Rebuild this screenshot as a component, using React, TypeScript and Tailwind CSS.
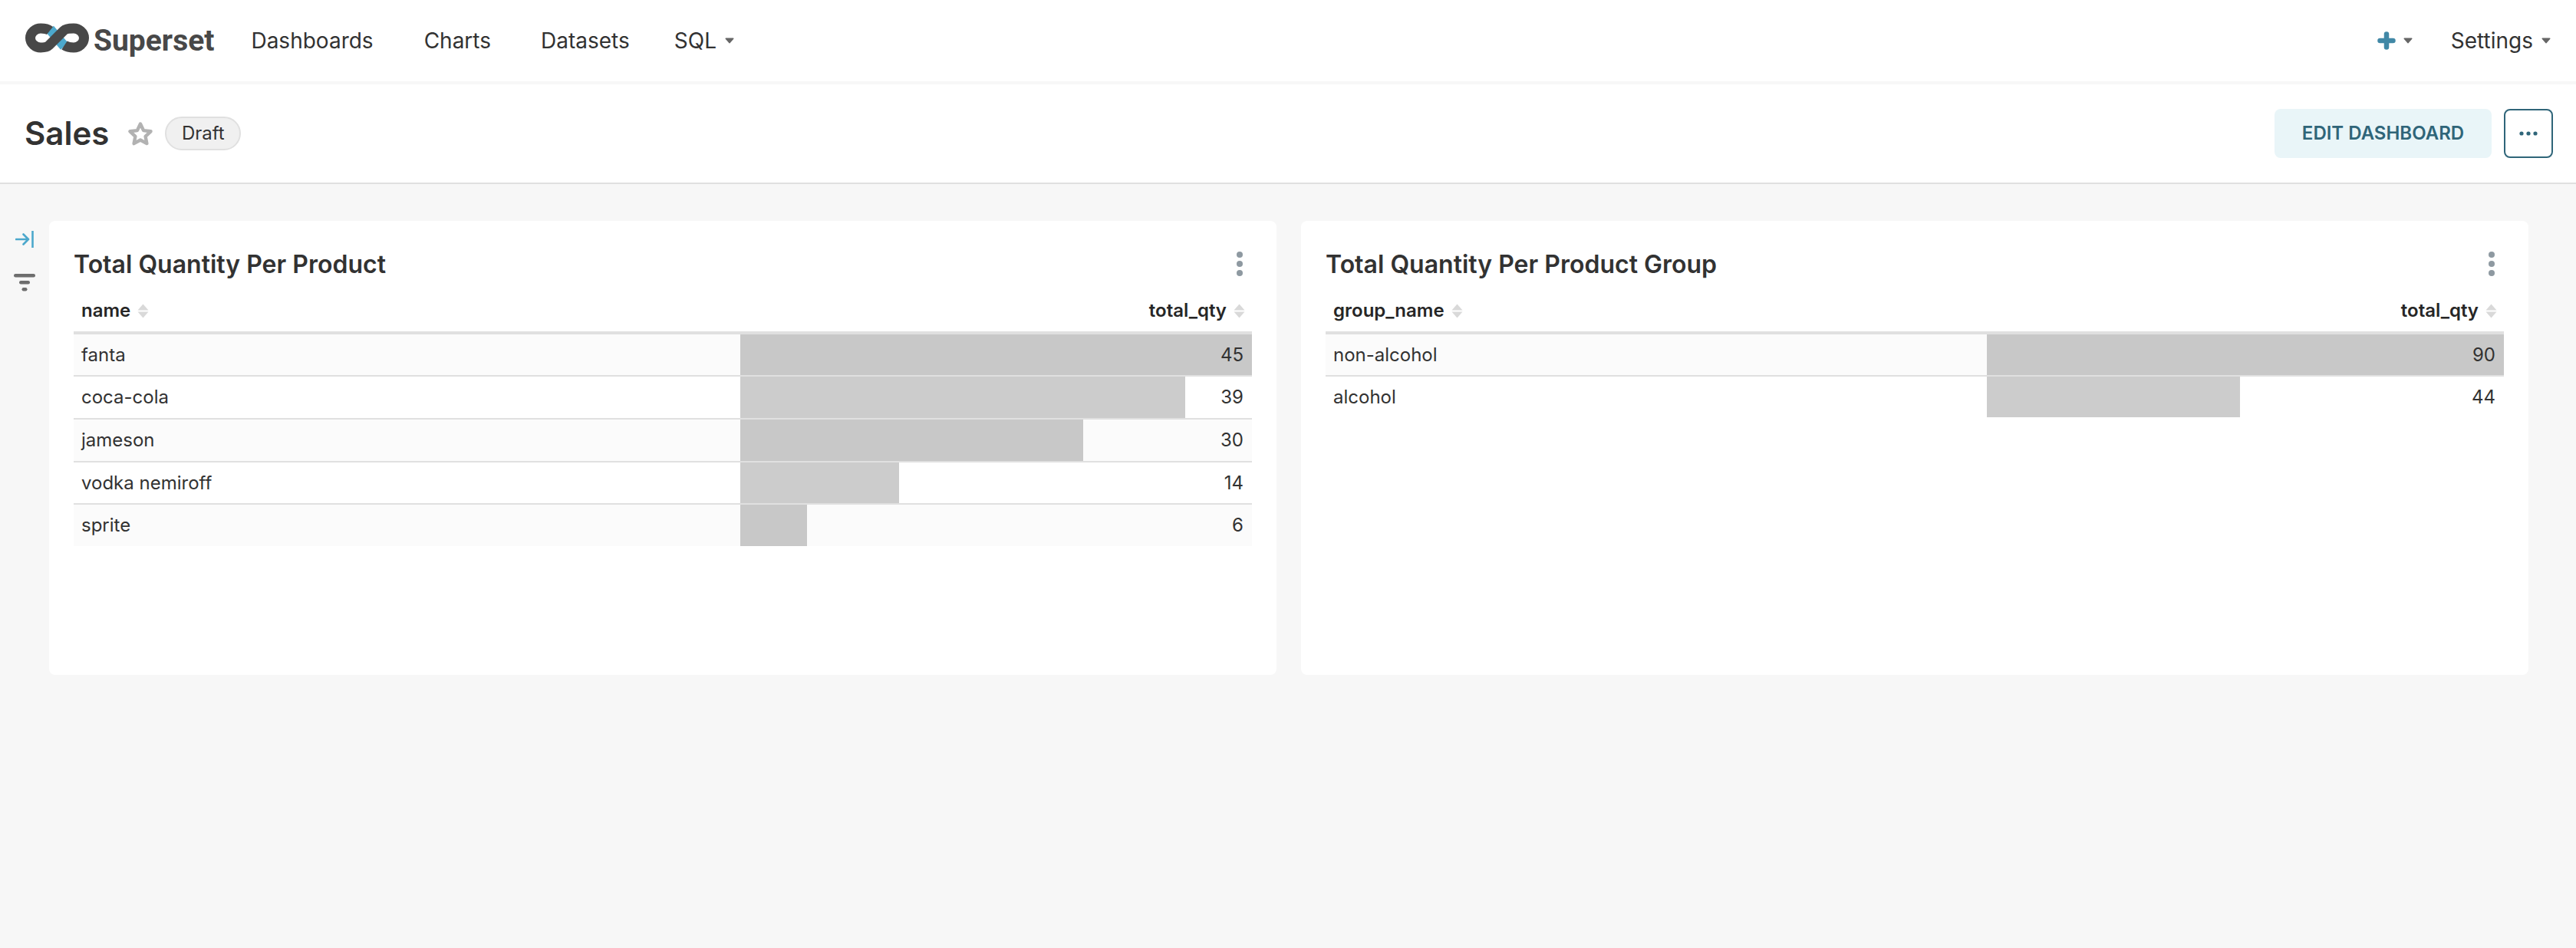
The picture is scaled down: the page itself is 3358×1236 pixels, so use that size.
const navLinks = [
  { label: "Dashboards", className: "ml-[48px]" },
  { label: "Charts", className: "ml-[66px]" },
  { label: "Datasets", className: "ml-[65px]" },
];

type Row = { label: string; value: number; bar: number; height: string };

const productRows: Row[] = [
  { label: "fanta", value: 45, bar: 100, height: "h-[55px]" },
  { label: "coca-cola", value: 39, bar: 86.9, height: "h-[56px]" },
  { label: "jameson", value: 30, bar: 67, height: "h-[56px]" },
  { label: "vodka nemiroff", value: 14, bar: 31, height: "h-[55px]" },
  { label: "sprite", value: 6, bar: 13.1, height: "h-[54px]" },
];

const groupRows: Row[] = [
  { label: "non-alcohol", value: 90, bar: 100, height: "h-[55px]" },
  { label: "alcohol", value: 44, bar: 49, height: "h-[53px]" },
];

function Caret() {
  return (
    <svg width="12" height="8" viewBox="0 0 12 8" className="shrink-0">
      <path d="M1.200 1.200h9.600L6 6.800z" fill="#666666" stroke="#666666" strokeWidth="1.400" strokeLinejoin="round" />
    </svg>
  );
}

function SortIcon() {
  return (
    <svg width="15" height="19" viewBox="0 0 15 19" className="shrink-0">
      <path d="M7.500 0.500L14.500 8.500H0.500z" fill="#d9d9d9" />
      <path d="M7.500 18.500L14.500 10.500H0.500z" fill="#d9d9d9" />
    </svg>
  );
}

function Logo() {
  return (
    <svg width="83" height="39" viewBox="0 0 83 38" className="mb-[8px] shrink-0">
      <path d="M32 7.500L51 30" fill="none" stroke="#4ca8cc" strokeWidth="13" />
      <path
        d="M32 9.500C29.500 7.500 25 6.500 20 6.500C13 6.500 6.500 12 6.500 19C6.500 26 13 31.500 20 31.500C25 31.500 29 30.500 31 28.500L50 9.500C52 7.500 57 6.500 63 6.500C70 6.500 76.500 12 76.500 19C76.500 26 70 31.500 63 31.500C58 31.500 54 30.500 51 28.500"
        fill="none"
        stroke="#484848"
        strokeWidth="13"
      />
    </svg>
  );
}

function DataTable({
  title,
  column,
  rows,
  labelClass,
  barClass,
}: {
  title: string;
  column: string;
  rows: Row[];
  labelClass: string;
  barClass: string;
}) {
  return (
    <section className="flex-1 h-[592px] rounded-lg bg-white px-[32px] pt-[32px]">
      <div className="flex h-[48px] items-center justify-between">
        <h2 className="mt-[2px] text-[32px] font-semibold leading-none text-[#323232]">{title}</h2>
        <svg width="8" height="32" viewBox="0 0 8 32" className="mr-[12px]">
          <circle cx="4" cy="4" r="4" fill="#8e99a1" />
          <circle cx="4" cy="16" r="4" fill="#8e99a1" />
          <circle cx="4" cy="28" r="4" fill="#8e99a1" />
        </svg>
      </div>
      <table className="w-full table-fixed border-separate border-spacing-0 text-[24px]">
        <colgroup>
          <col className={labelClass} />
          <col className={barClass} />
        </colgroup>
        <thead>
          <tr>
            <th className="h-[68px] border-b-4 border-[#e0e0e0] pl-[10px] pt-[10px] text-left font-semibold text-[#262626]">
              <span className="flex items-center gap-[9px]">
                {column}
                <SortIcon />
              </span>
            </th>
            <th className="border-b-4 border-[#e0e0e0] pr-[9px] pt-[10px] font-semibold text-[#262626]">
              <span className="flex items-center justify-end gap-[9px]">
                total_qty
                <SortIcon />
              </span>
            </th>
          </tr>
        </thead>
        <tbody>
          {rows.map((row, i) => {
            const last = i === rows.length - 1;
            return (
              <tr key={row.label} className={i % 2 === 0 ? "bg-[#fbfbfb]" : "bg-white"}>
                <td className={`${row.height} pl-[10px] ${last ? "" : "border-b-2 border-[#e0e0e0]"}`}>
                  {row.label}
                </td>
                <td className={`relative pr-[11px] text-right ${last ? "" : "border-b-2 border-[#e0e0e0]"}`}>
                  <div className="absolute inset-y-0 left-0 bg-black/20" style={{ width: `${row.bar}%` }} />
                  <span className="relative">{row.value}</span>
                </td>
              </tr>
            );
          })}
        </tbody>
      </table>
    </section>
  );
}

export default function App() {
  return (
    <div className="flex min-h-[1236px] flex-col bg-[#f7f7f7] font-['Inter',sans-serif] text-[#323232]">
      {/* Top nav */}
      <nav className="flex h-[106px] items-center bg-white px-[33px] text-[28px]">
        <Logo />
        <span className="ml-[6px] font-['Roboto',sans-serif] text-[39px] font-bold leading-none text-[#484848]">
          Superset
        </span>
        {navLinks.map((link) => (
          <a key={link.label} className={link.className}>
            {link.label}
          </a>
        ))}
        <span className="ml-[58px] flex items-center gap-[11px]">
          SQL
          <Caret />
        </span>
        <div className="ml-auto flex items-center">
          <svg width="24" height="24" viewBox="0 0 24 24" className="shrink-0">
            <path d="M12 3.500v17M3.500 12h17" stroke="#4188a6" strokeWidth="6.500" strokeLinecap="round" />
          </svg>
          <span className="ml-[10px]">
            <Caret />
          </span>
          <span className="ml-[50px] flex items-center gap-[11px]">
            Settings
            <Caret />
          </span>
        </div>
      </nav>

      {/* Dashboard header */}
      <header className="mt-[4px] flex h-[130px] items-center border-b-2 border-[#e0e0e0] bg-white pl-[32px] pr-[30px]">
        <h1 className="text-[42px] font-semibold leading-none text-[#323232]">Sales</h1>
        <svg width="34" height="32" viewBox="0 0 34 32" className="ml-[24px] shrink-0">
          <path
            d="M17 3.500l4.100 8.600 9.400 1.200-6.900 6.500 1.800 9.300L17 24.500l-8.400 4.600 1.800-9.300-6.900-6.500 9.400-1.200z"
            fill="none"
            stroke="#b2b2b2"
            strokeWidth="4.400"
            strokeLinejoin="round"
          />
        </svg>
        <span className="ml-[15px] flex h-[44px] w-[99px] items-center justify-center rounded-full border-2 border-[#e0e0e0] bg-[#f0f0f0] text-[24px]">
          Draft
        </span>
        <button className="ml-auto h-[64px] w-[283px] rounded-lg bg-[#e9f5f8] text-[24px] font-semibold text-[#2f6579]">
          EDIT DASHBOARD
        </button>
        <button className="ml-[16px] flex h-[64px] w-[64px] items-center justify-center rounded-lg border-2 border-[#2f6579]">
          <svg width="24" height="6" viewBox="0 0 24 6">
            <circle cx="3" cy="3" r="2.600" fill="#2f6579" />
            <circle cx="12" cy="3" r="2.600" fill="#2f6579" />
            <circle cx="21" cy="3" r="2.600" fill="#2f6579" />
          </svg>
        </button>
      </header>

      {/* Content */}
      <main className="flex pt-[48px]">
        <aside className="flex w-[64px] shrink-0 flex-col items-center pt-[13px]">
          <svg width="24" height="22" viewBox="0 0 24 22" className="-ml-[1px]">
            <path
              d="M1 11h16M10.500 4.500L17 11l-6.500 6.500M22.500 0.500v21"
              fill="none"
              stroke="#4ca8cc"
              strokeWidth="2.600"
              strokeLinecap="round"
              strokeLinejoin="round"
            />
          </svg>
          <svg width="28" height="23" viewBox="0 0 28 23" className="mt-[34px] -ml-[1px]">
            <rect x="0" y="0" width="28" height="4.500" rx="2.200" fill="#6e6e6e" />
            <rect x="7" y="9" width="14" height="4.500" rx="2.200" fill="#6e6e6e" />
            <rect x="10.500" y="18" width="7" height="4.500" rx="2.200" fill="#6e6e6e" />
          </svg>
        </aside>
        <div className="flex flex-1 gap-[32px] pr-[62px]">
          <DataTable
            title="Total Quantity Per Product"
            column="name"
            rows={productRows}
            labelClass="w-[869px]"
            barClass="w-[667px]"
          />
          <DataTable
            title="Total Quantity Per Product Group"
            column="group_name"
            rows={groupRows}
            labelClass="w-[862px]"
            barClass="w-[674px]"
          />
        </div>
      </main>
    </div>
  );
}
